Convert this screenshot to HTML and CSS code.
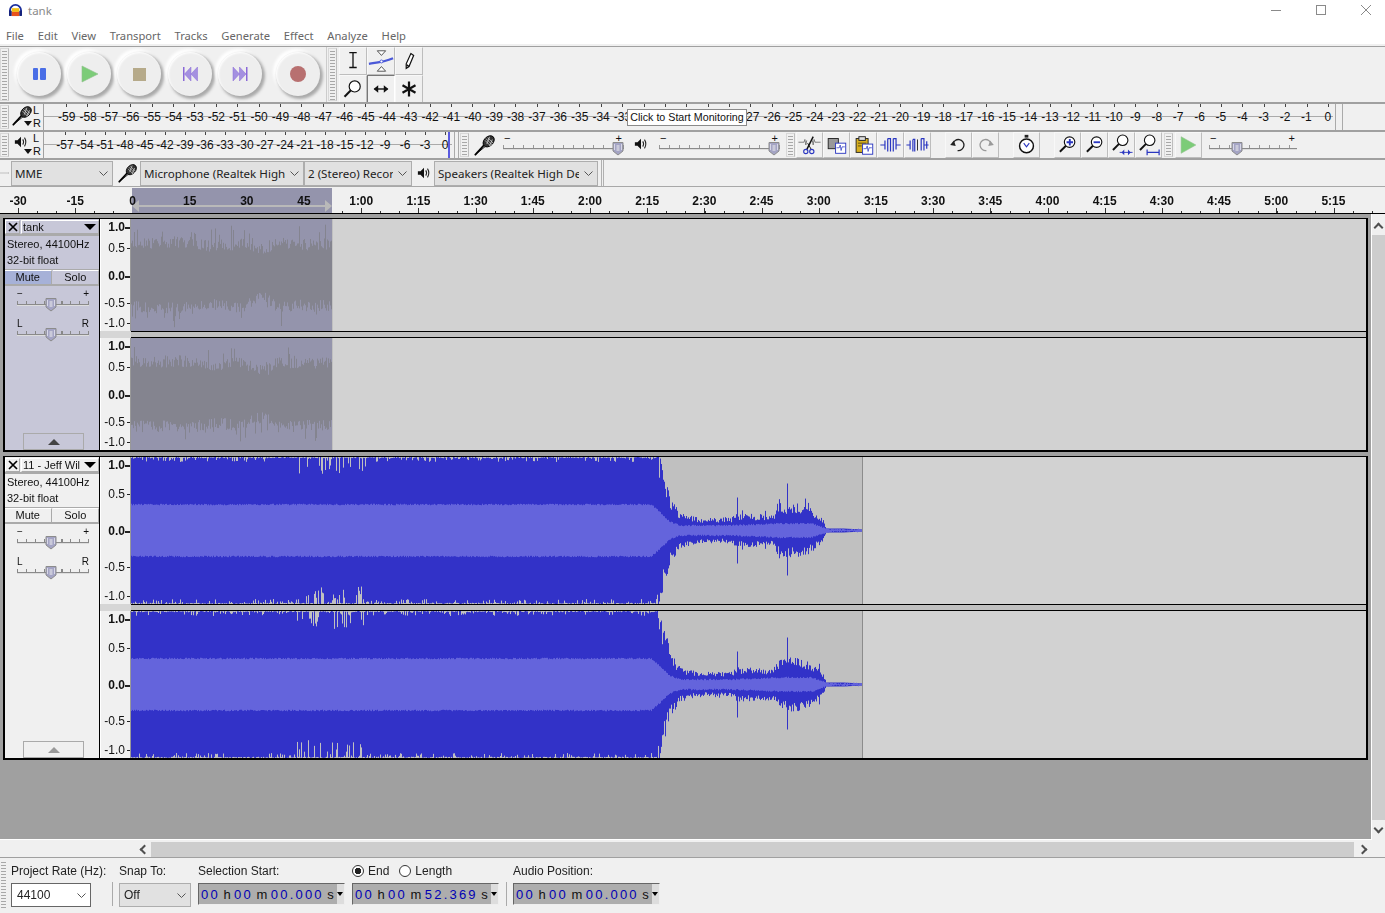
FILE: index.html
```html
<!DOCTYPE html>
<html lang="en">
<head>
<meta charset="utf-8">
<title>tank</title>
<link rel="stylesheet" href="styles.css">
</head>
<body>
<svg class="defs" width="0" height="0">
  <defs>
    <symbol id="mic" viewBox="0 0 24 24">
      <path d="M1 23 L11 12" stroke="#000" stroke-width="2" fill="none"/>
      <path d="M1 23 L13 13" stroke="#000" stroke-width="1" fill="none"/>
      <ellipse cx="16" cy="8" rx="5" ry="7" transform="rotate(45 16 8)" fill="#333" stroke="#000"/>
      <path d="M13 5 L20 12 M15 4 L21 10 M12 7 L18 13 M17 3 L14 11 M20 6 L17 13" stroke="#ddd" stroke-width=".8"/>
    </symbol>
    <symbol id="spk" viewBox="0 0 16 16">
      <path d="M1 6 H4 L8 2 V14 L4 10 H1 Z" fill="#111"/>
      <path d="M10 5 Q12 8 10 11 M12 3 Q15 8 12 13" stroke="#222" stroke-width="1.2" fill="none"/>
    </symbol>
    <symbol id="thumb" viewBox="0 0 12 15">
      <path d="M1 1.5 H11 V10 L6 14 L1 10 Z" fill="#a4a4c4" stroke="#8c8c8c"/>
      <path d="M2.5 3 V9 M9.5 3 V9" stroke="#d8d8e8"/>
      <path d="M4.5 5 H7.5 M4.5 7 H7.5 M4.5 9 H7.5" stroke="#f0f0f0"/>
    </symbol>
    <symbol id="lens" viewBox="0 0 24 24">
      <circle cx="14" cy="9" r="6.5" fill="#fff" stroke="#111" stroke-width="1.4"/>
      <path d="M9.5 13.5 L2 21" stroke="#111" stroke-width="2.4"/>
    </symbol>
    <symbol id="close" viewBox="0 0 12 12">
      <path d="M2 2 L10 10 M10 2 L2 10" stroke="#000" stroke-width="1.7"/>
    </symbol>
  </defs>
</svg>

<header class="titlebar">
  <svg class="app-logo" viewBox="0 0 16 14">
    <path d="M2 9 V7 a6 6 0 0 1 12 0 V9" fill="none" stroke="#1c2f9c" stroke-width="2"/>
    <rect x="1" y="7" width="3" height="6" rx="1" fill="#16237c"/>
    <rect x="12" y="7" width="3" height="6" rx="1" fill="#16237c"/>
    <rect x="4" y="4.500" width="8" height="4" fill="#f3c012"/>
    <rect x="4" y="8.500" width="8" height="4.500" fill="#e8521c"/>
  </svg>
  <span class="app-title">tank</span>
  <div class="win-controls">
    <svg class="win-btn" viewBox="0 0 12 12"><path d="M1 6.5 H11" stroke="#8a8a8a"/></svg>
    <svg class="win-btn" viewBox="0 0 12 12"><rect x="1.5" y="1.5" width="9" height="9" fill="none" stroke="#8a8a8a"/></svg>
    <svg class="win-btn" viewBox="0 0 12 12"><path d="M1 1 L11 11 M11 1 L1 11" stroke="#8a8a8a"/></svg>
  </div>
</header>

<nav class="menubar">
  <span>File</span><span>Edit</span><span>View</span><span>Transport</span><span>Tracks</span><span>Generate</span><span>Effect</span><span>Analyze</span><span>Help</span>
</nav>

<section class="row row-transport">
  <div class="grip"></div>
  <div class="transport">
    <button class="disc"><svg viewBox="0 0 44 44"><rect x="16" y="16" width="5" height="12" rx="1" fill="#4a6ee6"/><rect x="23" y="16" width="6" height="12" rx="1" fill="#4a6ee6"/></svg></button>
    <button class="disc"><svg viewBox="0 0 44 44"><path d="M15 14 L31 22 L15 30 Z" fill="#7ccc78" stroke="#8fbf8c" stroke-width=".6"/></svg></button>
    <button class="disc"><svg viewBox="0 0 44 44"><rect x="16" y="16" width="13" height="13" fill="#b6aa8a"/></svg></button>
    <button class="disc"><svg viewBox="0 0 44 44"><rect x="15" y="15" width="1.5" height="14" fill="#8a68d8"/><path d="M23 15 V29 L16.5 22 Z M29.5 15 V29 L23 22 Z" fill="#a490e0" stroke="#8a68d8" stroke-width=".5"/></svg></button>
    <button class="disc"><svg viewBox="0 0 44 44"><rect x="28" y="15" width="1.5" height="14" fill="#8a68d8"/><path d="M15 15 V29 L21.5 22 Z M21.5 15 V29 L28 22 Z" fill="#a490e0" stroke="#8a68d8" stroke-width=".5"/></svg></button>
    <button class="disc disc-rec"><svg viewBox="0 0 44 44"><circle cx="22" cy="22" r="8" fill="#b87070"/></svg></button>
  </div>
  <div class="grip grip-tools"></div>
  <div class="tools">
    <button class="tool"><svg viewBox="0 0 28 28"><path d="M10 5 H18 M14 5 V21 M10 21 H18" stroke="#111" stroke-width="1.4" fill="none"/></svg></button>
    <button class="tool"><svg viewBox="0 0 28 28"><path d="M10 3 H19 L14.5 8 Z M10 25 H19 L14.5 20 Z" fill="#fff" stroke="#222" stroke-width=".8"/><path d="M1 17 C8 16 18 15 27 11" stroke="#4a58d8" stroke-width="2.4" fill="none"/><circle cx="14.5" cy="14.5" r="1.6" fill="#fff" stroke="#4a58d8"/></svg></button>
    <button class="tool"><svg viewBox="0 0 28 28"><path d="M16 6 L19 8 L14 20 L11 22 L11 17 Z" fill="#fff" stroke="#111" stroke-width="1.3"/><path d="M11.500 18 L14 20" stroke="#111" stroke-width="1.6"/></svg></button>
    <button class="tool"><svg viewBox="0 0 28 28"><use href="#lens" x="3" y="3" width="22" height="22"/></svg></button>
    <button class="tool tool-on"><svg viewBox="0 0 28 28"><path d="M7 14 H21" stroke="#111" stroke-width="1.5"/><path d="M11 10 V18 L6 14 Z M17 10 V18 L22 14 Z" fill="#111"/></svg></button>
    <button class="tool"><svg viewBox="0 0 28 28"><path d="M14 6 V22 M7 10 L21 18 M21 10 L7 18" stroke="#111" stroke-width="2.4"/></svg></button>
  </div>
</section>

<section class="row row-meter">
  <div class="grip"></div>
  <div class="meter-icon">
    <svg class="meter-sym mic-sym"><use href="#mic"/></svg>
    <span class="caret"></span>
    <div class="lr"><span>L</span><span>R</span></div>
  </div>
  <div class="meter meter-rec">
    <span>-59</span><span>-58</span><span>-57</span><span>-56</span><span>-55</span><span>-54</span><span>-53</span><span>-52</span><span>-51</span><span>-50</span><span>-49</span><span>-48</span><span>-47</span><span>-46</span><span>-45</span><span>-44</span><span>-43</span><span>-42</span><span>-41</span><span>-40</span><span>-39</span><span>-38</span><span>-37</span><span>-36</span><span>-35</span><span>-34</span><span>-33</span><span>-32</span><span>-31</span><span>-30</span><span>-29</span><span>-28</span><span>-27</span><span>-26</span><span>-25</span><span>-24</span><span>-23</span><span>-22</span><span>-21</span><span>-20</span><span>-19</span><span>-18</span><span>-17</span><span>-16</span><span>-15</span><span>-14</span><span>-13</span><span>-12</span><span>-11</span><span>-10</span><span>-9</span><span>-8</span><span>-7</span><span>-6</span><span>-5</span><span>-4</span><span>-3</span><span>-2</span><span>-1</span><span>0</span>
  </div>
  <div class="meter-end"></div>
  <div class="tooltip">Click to Start Monitoring</div>
</section>

<section class="row row-mix">
  <div class="grip"></div>
  <div class="meter-icon">
    <svg class="meter-sym spk-sym"><use href="#spk"/></svg>
    <span class="caret"></span>
    <div class="lr"><span>L</span><span>R</span></div>
  </div>
  <div class="meter meter-play">
    <span>-57</span><span>-54</span><span>-51</span><span>-48</span><span>-45</span><span>-42</span><span>-39</span><span>-36</span><span>-33</span><span>-30</span><span>-27</span><span>-24</span><span>-21</span><span>-18</span><span>-15</span><span>-12</span><span>-9</span><span>-6</span><span>-3</span><span>0</span>
    <i class="peak"></i>
  </div>
  <div class="meter-end short"></div>
  <div class="grip grip-mix"></div>
  <svg class="mix-mic"><use href="#mic"/></svg>
  <div class="slider slider-in"><b class="minus">&minus;</b><b class="plus">+</b><svg class="thumb"><use href="#thumb"/></svg></div>
  <svg class="mix-spk"><use href="#spk"/></svg>
  <div class="slider slider-out"><b class="minus">&minus;</b><b class="plus">+</b><svg class="thumb"><use href="#thumb"/></svg></div>
  <div class="grip grip-edit"></div>
  <div class="edit-group">
    <button class="ebtn"><svg viewBox="0 0 26 26"><path d="M1 10 H7 L8 7 L9 13 L10 8 M16 8 L17 13 L18 7 L19 10 H25" stroke="#777" fill="none"/><path d="M17 4 L10 18" stroke="#111" stroke-width="1.6"/><path d="M11 11 L15 18" stroke="#111"/><circle cx="9" cy="20" r="2.3" fill="none" stroke="#2a36c0" stroke-width="1.2"/><circle cx="15.500" cy="20" r="2.3" fill="none" stroke="#2a36c0" stroke-width="1.2"/></svg></button>
    <button class="ebtn"><svg viewBox="0 0 26 26"><rect x="4" y="6" width="11" height="11" fill="#999" stroke="#222"/><rect x="12" y="11" width="11" height="11" fill="#fff" stroke="#2a36c0"/><path d="M13 16 H16 L17 13 L18 19 L19 15 H22" stroke="#2a36c0" fill="none" stroke-width=".8"/></svg></button>
    <button class="ebtn"><svg viewBox="0 0 26 26"><rect x="5" y="6" width="13" height="15" fill="#d8b020" stroke="#222"/><rect x="8" y="4" width="7" height="4" fill="#ddd" stroke="#222"/><path d="M7 11 H16 M7 14 H11" stroke="#5a4a10"/><rect x="12" y="12" width="11" height="11" fill="#fff" stroke="#2a36c0"/><path d="M13 17 H16 L17 14 L18 20 L19 16 H22" stroke="#2a36c0" fill="none" stroke-width=".8"/></svg></button>
    <button class="ebtn"><svg viewBox="0 0 26 26"><path d="M2 13 H7 M7 8 V18 M10 6 V20 M10 6 H13 V20 M16 6 V20 M16 6 H19 V18 M19 13 H24" stroke="#2a36c0" fill="none" stroke-width="1.3"/></svg></button>
    <button class="ebtn"><svg viewBox="0 0 26 26"><path d="M1 13 H5 M5 8 V18 M8 7 V20 M8 7 H10 V20 M17 6 V19 M17 6 H20 V19 M23 9 V17 M20 13 H25" stroke="#2a36c0" fill="none" stroke-width="1.3"/><path d="M13 7 V19" stroke="#222"/></svg></button>
  </div>
  <div class="edit-group eg-undo">
    <button class="ebtn"><svg viewBox="0 0 26 26"><path d="M7 12 A6 6 0 1 1 12 19" fill="none" stroke="#222" stroke-width="1.4"/><path d="M4 13 L10 14 L8 8 Z" fill="#222"/></svg></button>
    <button class="ebtn"><svg viewBox="0 0 26 26"><path d="M19 12 A6 6 0 1 0 14 19" fill="none" stroke="#999" stroke-width="1.4"/><path d="M22 13 L16 14 L18 8 Z" fill="#999"/></svg></button>
  </div>
  <div class="edit-group eg-timer">
    <button class="ebtn"><svg viewBox="0 0 26 26"><rect x="11" y="2" width="4" height="3" fill="#222"/><circle cx="13" cy="14" r="7.500" fill="#fff" stroke="#111" stroke-width="1.600"/><path d="M10 11 L13 15 L16 11" stroke="#2a36c0" fill="none" stroke-width="1.200"/></svg></button>
  </div>
  <div class="edit-group eg-zoom">
    <button class="ebtn"><svg viewBox="0 0 26 26"><use href="#lens" x="3" y="2" width="21" height="21"/><path d="M12 10 H19 M15.500 6.500 V13.500" stroke="#2a36c0" stroke-width="2"/></svg></button>
    <button class="ebtn"><svg viewBox="0 0 26 26"><use href="#lens" x="3" y="2" width="21" height="21"/><path d="M12 10 H19" stroke="#2a36c0" stroke-width="2"/></svg></button>
    <button class="ebtn"><svg viewBox="0 0 26 26"><use href="#lens" x="2" y="0" width="21" height="21"/><path d="M11 21 H25" stroke="#2a36c0"/><path d="M16 18 V24 L13 21 Z M20 18 V24 L23 21 Z" fill="#2a36c0"/></svg></button>
    <button class="ebtn"><svg viewBox="0 0 26 26"><use href="#lens" x="2" y="0" width="21" height="21"/><path d="M11 21 H25 M11.500 18 V24 M24.500 18 V24" stroke="#2a36c0" stroke-width="1.300"/></svg></button>
  </div>
  <div class="grip grip-speed"></div>
  <button class="ebtn play-speed"><svg viewBox="0 0 26 26"><path d="M5 4 L21 13 L5 22 Z" fill="#7ccc78" stroke="#8fbf8c" stroke-width=".6"/></svg></button>
  <div class="slider slider-speed"><b class="minus">&minus;</b><b class="plus">+</b><svg class="thumb"><use href="#thumb"/></svg></div>
</section>

<section class="row row-device">
  <div class="grip"></div>
  <div class="combo combo-host"><span>MME</span></div>
  <svg class="dev-mic"><use href="#mic"/></svg>
  <div class="combo combo-mic"><span>Microphone (Realtek High</span></div>
  <div class="combo combo-ch"><span>2 (Stereo) Recor</span></div>
  <svg class="dev-spk"><use href="#spk"/></svg>
  <div class="combo combo-out"><span>Speakers (Realtek High Def</span></div>
  <div class="dev-end"></div>
</section>

<section class="timeline">
  <div class="selection"><i class="handle handle-l"></i><i class="handle handle-r"></i></div>
  <div class="time-labels">
    <span>-30</span><span>-15</span><span>0</span><span>15</span><span>30</span><span>45</span><span>1:00</span><span>1:15</span><span>1:30</span><span>1:45</span><span>2:00</span><span>2:15</span><span>2:30</span><span>2:45</span><span>3:00</span><span>3:15</span><span>3:30</span><span>3:45</span><span>4:00</span><span>4:15</span><span>4:30</span><span>4:45</span><span>5:00</span><span>5:15</span>
  </div>
</section>

<main class="workspace">
  <div class="tracks">
    <article class="track track-short selected">
      <div class="panel">
        <div class="panel-head"><button class="x"><svg><use href="#close"/></svg></button><div class="name"><span>tank</span><i class="tri"></i></div></div>
        <div class="info">Stereo, 44100Hz<br>32-bit float</div>
        <div class="ms"><button class="ms-on">Mute</button><button>Solo</button></div>
        <div class="tslider"><b>&minus;</b><b>+</b><svg class="thumb"><use href="#thumb"/></svg></div>
        <div class="tslider pan"><b>L</b><b>R</b><svg class="thumb"><use href="#thumb"/></svg></div>
        <button class="collapse"><i></i></button>
      </div>
      <div class="channels">
        <div class="channel">
          <div class="vruler vr-a"><span class="b">1.0</span><span>0.5</span><span class="b">0.0</span><span>-0.5</span><span>-1.0</span></div>
          <canvas class="wave" data-kind="a" data-seed="11" width="1235" height="112"></canvas>
        </div>
        <div class="ch-sep"></div>
        <div class="channel">
          <div class="vruler vr-a"><span class="b">1.0</span><span>0.5</span><span class="b">0.0</span><span>-0.5</span><span>-1.0</span></div>
          <canvas class="wave" data-kind="a" data-seed="29" width="1235" height="112"></canvas>
        </div>
      </div>
    </article>
    <article class="track track-tall">
      <div class="panel">
        <div class="panel-head"><button class="x"><svg><use href="#close"/></svg></button><div class="name"><span>11 - Jeff Wil</span><i class="tri"></i></div></div>
        <div class="info">Stereo, 44100Hz<br>32-bit float</div>
        <div class="ms"><button>Mute</button><button>Solo</button></div>
        <div class="tslider"><b>&minus;</b><b>+</b><svg class="thumb"><use href="#thumb"/></svg></div>
        <div class="tslider pan"><b>L</b><b>R</b><svg class="thumb"><use href="#thumb"/></svg></div>
        <button class="collapse dim"><i></i></button>
      </div>
      <div class="channels">
        <div class="channel">
          <div class="vruler vr-b"><span class="b">1.0</span><span>0.5</span><span class="b">0.0</span><span>-0.5</span><span>-1.0</span></div>
          <canvas class="wave" data-kind="b" data-seed="5" width="1235" height="147"></canvas>
        </div>
        <div class="ch-sep"></div>
        <div class="channel">
          <div class="vruler vr-b"><span class="b">1.0</span><span>0.5</span><span class="b">0.0</span><span>-0.5</span><span>-1.0</span></div>
          <canvas class="wave" data-kind="b" data-seed="17" width="1235" height="147"></canvas>
        </div>
      </div>
    </article>
  </div>
  <div class="vscroll"><i class="chev up"></i><div class="vthumb"></div><i class="chev down"></i></div>
</main>

<div class="hscroll"><i class="chev left"></i><div class="hthumb"></div><i class="chev right"></i></div>

<footer class="status">
  <div class="grip grip-status"></div>
  <div class="st-col st-rate">
    <label>Project Rate (Hz):</label>
    <div class="combo combo-rate"><span>44100</span></div>
  </div>
  <div class="st-sep"></div>
  <div class="st-col st-snap">
    <label>Snap To:</label>
    <div class="combo combo-snap"><span>Off</span></div>
  </div>
  <div class="st-col st-start">
    <label>Selection Start:</label>
    <div class="clock"><span class="dg">00</span><span>h</span><span class="dg">00</span><span>m</span><span class="dg">00.000</span><span>s</span><i class="clock-btn"></i></div>
  </div>
  <div class="st-col st-end">
    <div class="radios"><i class="radio on"></i><label>End</label><i class="radio"></i><label>Length</label></div>
    <div class="clock"><span class="dg">00</span><span>h</span><span class="dg">00</span><span>m</span><span class="dg">52.369</span><span>s</span><i class="clock-btn"></i></div>
  </div>
  <div class="st-sep st-sep2"></div>
  <div class="st-col st-pos">
    <label>Audio Position:</label>
    <div class="clock"><span class="dg">00</span><span>h</span><span class="dg">00</span><span>m</span><span class="dg">00.000</span><span>s</span><i class="clock-btn"></i></div>
  </div>
</footer>
<script src="script.js"></script>
</body>
</html>
```

FILE: styles.css
```css
* { box-sizing: border-box; }
html, body { margin: 0; padding: 0; }
body { width: 1385px; height: 913px; overflow: hidden; background: #f0f0f0; font-family: "Liberation Sans", Arial, sans-serif; font-size: 12px; color: #111; }
button { margin: 0; padding: 0; font: inherit; color: inherit; background: none; border: 0; }
.defs { position: absolute; }

.titlebar { height: 24px; background: #fff; display: flex; align-items: center; padding-left: 8px; position: relative; }
.app-logo { width: 15px; height: 13px; margin-top: -4px; }
.app-title { margin-left: 5px; margin-top: -3px; font: 11.5px "Noto Sans", sans-serif; color: #8a8a8a; }
.win-controls { margin-left: auto; display: flex; margin-top: -4px; }
.win-btn { width: 12px; height: 12px; margin-left: 33px; }
.win-btn:last-child { margin-right: 13px; }

.menubar { height: 22px; background: linear-gradient(#fff 20px, #f0f0f0 20px); display: flex; padding: 3px 0 0 6px; font: 11.2px "Noto Sans", sans-serif; color: #666; line-height: 18px; gap: 13.800px; }

.row { display: flex; border-top: 1px solid #a0a0a0; background: #f0f0f0; position: relative; }
.grip { width: 9px; flex: none; margin: 1px 0; border: 1px solid #d8d8d8; border-right-color: #bdbdbd; background: repeating-linear-gradient(#f0f0f0 0 2px, #a8a8a8 2px 3px) center / 5px 100% no-repeat; }
.row-transport { height: 56px; }
.row-meter { height: 28px; border-top: 2px solid #a0a0a0; }
.row-mix { height: 28px; border-top: 2px solid #a0a0a0; }
.row-device { height: 28px; border-top: 2px solid #a0a0a0; }

.transport { width: 318px; display: flex; align-items: center; padding: 0 0 2px 8px; gap: 6.2px; border-right: 1px solid #ccc; }
.disc { width: 44px; height: 44px; flex: none; border-radius: 50%; background: #eee; box-shadow: 2px 2px 3px 1px #a9a9a9, -2px -2px 3px 1px #fff, inset 1px 1px 2px #fff; }
.disc svg { width: 44px; height: 44px; display: block; }
.disc-rec { margin-left: 8px; }
.grip-tools { margin-left: 1px; }
.tools { width: 86px; margin-left: 2px; display: grid; grid-template-columns: repeat(3, 28px); grid-auto-rows: 28px; }
.tool { width: 28px; height: 28px; border: 1px solid #bdbdbd; border-top-color: #f8f8f8; border-left-color: #f8f8f8; }
.tool svg { width: 26px; height: 26px; display: block; }
.tool-on { border: 1px solid #fff; border-top-color: #777; border-left-color: #777; }

.meter-icon { width: 34px; flex: none; position: relative; height: 100%; }
.meter-sym { position: absolute; }
.mic-sym { left: 3px; top: 1px; width: 21px; height: 21px; }
.spk-sym { left: 5px; top: 3px; width: 14px; height: 14px; }
.caret { position: absolute; left: 15px; top: 17px; border: 4px solid transparent; border-top: 5px solid #111; }
.lr { position: absolute; left: 24px; top: 0; height: 100%; display: flex; flex-direction: column; justify-content: space-between; font-size: 11px; line-height: 13px; }
.meter { height: 100%; display: flex; overflow: hidden; position: relative; border-left: 1px solid #a0a0a0; font-size: 12px; line-height: 26px; white-space: nowrap; }
.meter span { flex: none; text-align: center; }
.meter-rec { width: 1290px; padding-left: 12px; background: linear-gradient(#aaa, #aaa) 0 12px / 100% 1px no-repeat, repeating-linear-gradient(90deg, #444 0 1px, transparent 1px 21.39px) 22px 0 / 100% 3px no-repeat; }
.meter-rec span { width: 21.39px; }
.meter-play { width: 409px; padding-left: 11px; background: linear-gradient(#aaa, #aaa) 0 12px / 100% 1px no-repeat, repeating-linear-gradient(90deg, #444 0 1px, transparent 1px 20px) 21px 0 / 100% 3px no-repeat; }
.meter-play span { width: 20px; }
.peak { position: absolute; left: 404px; top: 0; bottom: 0; width: 2px; background: #5a5ae0; }
.meter-end { width: 8px; margin-left: 2px; border-left: 1px solid #aaa; border-right: 1px solid #aaa; height: 100%; }
.meter-end.short { width: 5px; }
.tooltip { position: absolute; left: 627px; top: 5px; width: 120px; height: 17px; background: #fff; border: 1px solid #8a8a8a; font-size: 10.700px; line-height: 15px; text-align: center; white-space: nowrap; z-index: 3; }

.grip-mix { margin-left: 1px; }
.mix-mic { width: 22px; height: 22px; margin: 2px 0 0 5px; flex: none; }
.slider { flex: none; position: relative; height: 100%; }
.slider::before { content: ""; position: absolute; left: 0; right: 0; top: 16px; height: 1px; background: #8a8a8a; box-shadow: 0 1px 0 #ddd; }
.slider::after { content: ""; position: absolute; left: 0; right: 0; top: 13px; height: 3px; background: repeating-linear-gradient(90deg, #999 0 1px, transparent 1px 10px); }
.slider b { position: absolute; top: 0; font: 11px/12px "Liberation Sans", sans-serif; }
.slider .minus { left: 1px; }
.slider .plus { right: 2px; }
.thumb { position: absolute; width: 12px; height: 15px; z-index: 1; }
.slider .thumb { top: 9px; }
.slider-in { width: 121px; margin-left: 7px; }
.slider-in .thumb { right: 0; }
.mix-spk { width: 14px; height: 14px; flex: none; margin: 5px 11px 0 10px; }
.slider-out { width: 121px; }
.slider-out .thumb { right: 0; }
.grip-edit { margin-left: 6px; }
.edit-group { display: flex; flex: none; margin-left: 1px; height: 26px; }
.ebtn { width: 27px; height: 26px; flex: none; border-right: 1px solid #bdbdbd; border-bottom: 1px solid #bdbdbd; border-top: 1px solid #f8f8f8; border-left: 1px solid #f8f8f8; }
.ebtn svg { width: 25px; height: 24px; display: block; }
.eg-undo, .eg-timer, .eg-zoom { margin-left: 14px; }
.grip-speed { margin-left: 2px; }
.play-speed { margin-left: 2px; }
.slider-speed { width: 88px; margin-left: 7px; }
.slider-speed .thumb { left: 22px; }

.combo { height: 25px; background: #e1e1e1 url("data:image/svg+xml,%3Csvg xmlns='http://www.w3.org/2000/svg' width='9' height='5'%3E%3Cpath d='M.5 .5 L4.5 4.5 L8.5 .5' fill='none' stroke='%23555'/%3E%3C/svg%3E") no-repeat right 4px center; border: 1px solid #adadad; font: 11.600px/23px "Noto Sans", sans-serif; color: #222; padding: 0 18px 0 3px; overflow: hidden; white-space: nowrap; flex: none; }
.combo span { display: block; overflow: hidden; }
.row-device { align-items: center; }
.combo-host { width: 102px; margin-left: 2px; }
.dev-mic { width: 20px; height: 20px; margin: 0 2px 0 5px; flex: none; }
.combo-mic { width: 164px; }
.combo-ch { width: 108px; }
.dev-spk { width: 14px; height: 14px; margin: 0 3px 0 5px; flex: none; }
.combo-out { width: 164px; }
.dev-end { width: 3px; height: 100%; margin-left: 3px; border-left: 1px solid #b0b0b0; border-right: 1px solid #b0b0b0; }

.timeline { height: 28px; border-top: 1px solid #a8a8a8; border-bottom: 1px solid #000; position: relative; background: repeating-linear-gradient(90deg, #333 0 1px, transparent 1px 19.07px) 18px 100% / 100% 2px no-repeat, repeating-linear-gradient(90deg, #333 0 1px, transparent 1px 57.2px) 18px 100% / 100% 5px no-repeat, #f0f0f0; }
.selection { position: absolute; left: 132px; width: 200px; top: 1px; bottom: 0; background: #9494ac; }
.handle { position: absolute; top: 12px; border: 6px solid transparent; }
.handle-l { left: 0; border-right: 7px solid #b9b9b9; border-left: 0; }
.handle-r { right: 0; border-left: 7px solid #b9b9b9; border-right: 0; }
.selection::after { content: ""; position: absolute; left: 6px; right: 6px; top: 17px; height: 2px; background: #b9b9b9; }
.time-labels { position: relative; display: flex; margin-left: -10.500px; font-weight: bold; font-size: 12px; line-height: 28px; }
.time-labels span { width: 57.2px; flex: none; text-align: center; }

.workspace { height: 626px; display: flex; background: #a0a0a0; }
.tracks { width: 1372px; border-right: 1px solid #fff; border-bottom: 1px solid #fff; padding: 4px 0 0 3px; display: flex; flex-direction: column; gap: 4px; }
.track { width: 1365px; display: flex; border: 2px solid #000; border-width: 1px 2px 2px 2px; background: #f0f0f0; flex: none; }
.track-short { height: 234px; }
.track-tall { height: 304px; }
.panel { width: 95px; flex: none; border-right: 1px solid #000; position: relative; background: #f0f0f0; font-size: 11px; }
.selected .panel { background: #c7c7d8; }
.panel-head { display: flex; height: 17px; border-bottom: 2px solid #aaa; padding: 1px 0 0 0; gap: 1px; }
.x { width: 15px; height: 14px; border: 1px solid #aaa; border-top-color: #fff; border-left-color: #fff; }
.x svg { width: 12px; height: 12px; display: block; margin: 0 auto; }
.name { flex: 1; display: flex; align-items: center; justify-content: space-between; padding: 0 2px 0 1px; height: 14px; border: 1px solid #aaa; border-top-color: #fff; border-left-color: #fff; white-space: nowrap; overflow: hidden; }
.tri { border: 6px solid transparent; border-top: 6px solid #000; border-bottom: 0; flex: none; }
.info { height: 34px; padding: 0 0 0 2px; line-height: 16px; border-bottom: 1px solid #aaa; }
.ms { display: flex; height: 16px; border-bottom: 2px solid #aaa; gap: 1px; font-size: 11px; }
.ms button { flex: 1; border-right: 1px solid #aaa; border-top: 1px solid #fff; background: transparent; line-height: 13px; }
.ms .ms-on { background: #a6b1d8; }
.tslider { position: relative; height: 30px; margin: 0 11px 0 12px; width: 72px; }
.tslider::before { content: ""; position: absolute; left: 0; right: 0; top: 18px; height: 1px; background: #8a8a8a; box-shadow: 0 1px 0 #ddd; }
.tslider::after { content: ""; position: absolute; left: 0; right: 0; top: 15px; height: 3px; background: repeating-linear-gradient(90deg, #888 0 1px, transparent 1px 8.9px); }
.tslider b { position: absolute; top: 3px; font: 10px/10px "Liberation Sans", sans-serif; }
.tslider b:first-child { left: 0; }
.tslider b:nth-child(2) { right: 0; }
.tslider .thumb { left: 28px; top: 11px; }
.collapse { position: absolute; left: 18px; bottom: 0; width: 61px; height: 17px; border: 1px solid #aaa; }
.collapse i { display: block; margin: 0 auto; width: 0; height: 0; border: 6px solid transparent; border-bottom: 6px solid #444; border-top: 0; }
.collapse.dim i { border-bottom-color: #999; }
.channels { flex: 1; display: flex; flex-direction: column; }
.channel { display: flex; flex: none; }
.ch-sep { height: 7px; flex: none; background: linear-gradient(90deg, #d6d6d6 31px, transparent 31px), linear-gradient(#000 1px, #c0c0c0 1px, #c0c0c0 6px, #000 6px); }
.vruler { width: 31px; flex: none; display: grid; text-align: right; padding: 1px 5px 0 0; font-size: 12px; line-height: 14px; background: #f0f0f0; border-left: 1px solid #fff; border-right: 1px solid #999; }
.vruler span { display: block; white-space: nowrap; position: relative; }
.vruler span::after { content: ""; position: absolute; right: -5px; top: 7px; width: 3px; height: 1px; background: #222; }
.vruler .b { font-weight: bold; }
.vruler .b::after { width: 5px; height: 2px; }
.vr-a { height: 112px; grid-template-rows: 21px 28px 27px 20px 15px; }
.vr-b { height: 147px; grid-template-rows: 29px 37px 36px 29px 15px; }
.wave { display: block; width: 1235px; flex: none; }

.vscroll { width: 13px; flex: none; display: flex; flex-direction: column; align-items: center; background: #f0f0f0; }
.vthumb { flex: 1; width: 13px; background: #cdcdcd; margin: 4px 0 5px; }
.chev { display: block; width: 7px; height: 7px; border: solid #505050; border-width: 2px 2px 0 0; flex: none; }
.chev.up { transform: rotate(-45deg); margin-top: 10px; }
.chev.down { transform: rotate(135deg); margin-bottom: 8px; }
.chev.left { transform: rotate(-135deg); margin-left: 141px; }
.chev.right { transform: rotate(45deg); margin-right: 19px; }

.hscroll { height: 17px; display: flex; align-items: center; background: #f0f0f0; border-top: 1px solid #f0f0f0; }
.hthumb { width: 1203px; height: 15px; background: #cdcdcd; margin: 0 5px 0 3px; flex: none; }

.status { height: 55px; border-top: 1px solid #a0a0a0; display: flex; font-size: 12px; color: #222; }
.grip-status { width: 7px; margin: 2px 0; border: 0; background: repeating-linear-gradient(#f0f0f0 0 2px, #a8a8a8 2px 3px) center / 5px 100% no-repeat; }
.st-col { flex: none; display: flex; flex-direction: column; padding-top: 6px; }
.st-col label { line-height: 14px; height: 19px; display: block; white-space: nowrap; }
.st-rate { margin-left: 4px; width: 101px; }
.combo-rate { width: 80px; height: 24px; background-color: #fff; border: 1px solid #666; font: 12px/22px "Liberation Sans", sans-serif; padding-left: 5px; }
.st-sep { width: 1px; height: 24px; background: #aaa; margin: 24px 6px 0 0; flex: none; }
.st-snap { width: 79px; }
.combo-snap { width: 72px; height: 24px; font: 12px/22px "Liberation Sans", sans-serif; padding-left: 4px; }
.st-start { width: 154px; }
.st-end { width: 154px; }
.radios { display: flex; align-items: flex-start; height: 19px; }
.radios label { margin-right: 10px; }
.radio { width: 12px; height: 12px; border-radius: 50%; border: 1px solid #333; background: #fff; margin: 1px 4px 0 0; flex: none; }
.radio.on { background: radial-gradient(#222 0 3px, #fff 3.500px); }
.clock { width: 147px; height: 22px; background: #adadad; border: 1px solid; border-color: #666 #eee #eee #666; position: relative; display: flex; align-items: center; gap: 3.500px; padding-left: 2px; font-size: 13px; color: #111; white-space: nowrap; }
.clock .dg { color: #0000b4; letter-spacing: 2.200px; }
.clock-btn { position: absolute; right: 0; top: 0; bottom: 0; width: 7px; background: #ddd; }
.clock-btn::after { content: ""; position: absolute; left: 0; top: 8px; border: 3.500px solid transparent; border-top: 4px solid #000; }
.st-pos { width: 150px; }
```

FILE: script.js
```js
function rng(seed) {
  let s = seed * 2654435761 % 4294967296;
  return function () {
    s = (s * 1664525 + 1013904223) % 4294967296;
    return s / 4294967296;
  };
}

function lerpTable(table, x) {
  for (let i = 1; i < table.length; i++) {
    if (x <= table[i][0]) {
      const a = table[i - 1], b = table[i];
      return a[1] + (b[1] - a[1]) * (x - a[0]) / (b[0] - a[0]);
    }
  }
  return table[table.length - 1][1];
}

function drawShort(ctx, h, r) {
  const W = 1235, end = 201, mid = h / 2;
  ctx.fillStyle = "#d2d2d2";
  ctx.fillRect(0, 0, W, h);
  ctx.fillStyle = "#9494ac";
  ctx.fillRect(0, 0, end, h);
  const env = [[0, 32], [60, 33], [80, 29], [110, 31], [125, 24], [135, 23], [148, 33], [165, 30], [185, 31], [201, 31]];
  ctx.fillStyle = "#84848f";
  for (let x = 0; x < end; x++) {
    const base = lerpTable(env, x);
    const up = base + r() * 12 - 6 + (r() < .1 ? r() * 18 : 0);
    const dn = base + r() * 12 - 6 + (r() < .1 ? r() * 18 : 0);
    ctx.fillRect(x, mid - up, 1, up + dn);
  }
  ctx.fillStyle = "#c0c0c0";
  ctx.fillRect(end, 0, 1, h);
}

function drawTall(ctx, h, r) {
  const W = 1235, mid = h / 2, clipEnd = 731;
  const peak = [[0, 80], [526, 80], [529, 58], [532, 48], [536, 37], [541, 24], [549, 14], [570, 10], [600, 11], [607, 14], [640, 13], [650, 21], [665, 22], [680, 18], [692, 9], [695, 2], [712, 2], [731, 1]];
  const rms = [[0, 26], [520, 26], [529, 18], [538, 9], [549, 5], [600, 5], [650, 7], [680, 7], [695, 2], [700, 1], [731, 1]];
  ctx.fillStyle = "#d2d2d2";
  ctx.fillRect(0, 0, W, h);
  ctx.fillStyle = "#c0c0c0";
  ctx.fillRect(0, 0, clipEnd, h);
  ctx.fillStyle = "#8c8c8c";
  ctx.fillRect(clipEnd, 0, 1, h);
  for (let x = 0; x < clipEnd; x++) {
    const p = lerpTable(peak, x), q = lerpTable(rms, x);
    let up = p, dn = p;
    if (x < 526) {
      const heavy = x > 164 && x < 235;
      const chance = heavy ? .32 : .25;
      const depth = heavy ? 18 : 5;
      up = mid - (r() < chance ? r() * depth : r() * 1.2);
      dn = mid - (r() < chance ? r() * depth : r() * 1.2);
    } else if (x < 695) {
      up += (r() - .5) * p * .5;
      dn += (r() - .5) * p * .5;
      if (x > 600 && r() < .04) { up += 8; dn += 8; }
    }
    if (x === 606) { up = 33; dn = 33; }
    if (x === 656) { up = 47; dn = 45; }
    ctx.fillStyle = "#3232c8";
    ctx.fillRect(x, mid - up, 1, up + dn);
    const a = q + (r() - .5) * 1.6, b = q + (r() - .5) * 1.6;
    ctx.fillStyle = "#6464dc";
    ctx.fillRect(x, mid - a, 1, a + b);
  }
}

document.querySelectorAll("canvas.wave").forEach(function (c) {
  const ctx = c.getContext("2d");
  const r = rng(Number(c.dataset.seed));
  if (c.dataset.kind === "a") drawShort(ctx, c.height, r);
  else drawTall(ctx, c.height, r);
});
```
